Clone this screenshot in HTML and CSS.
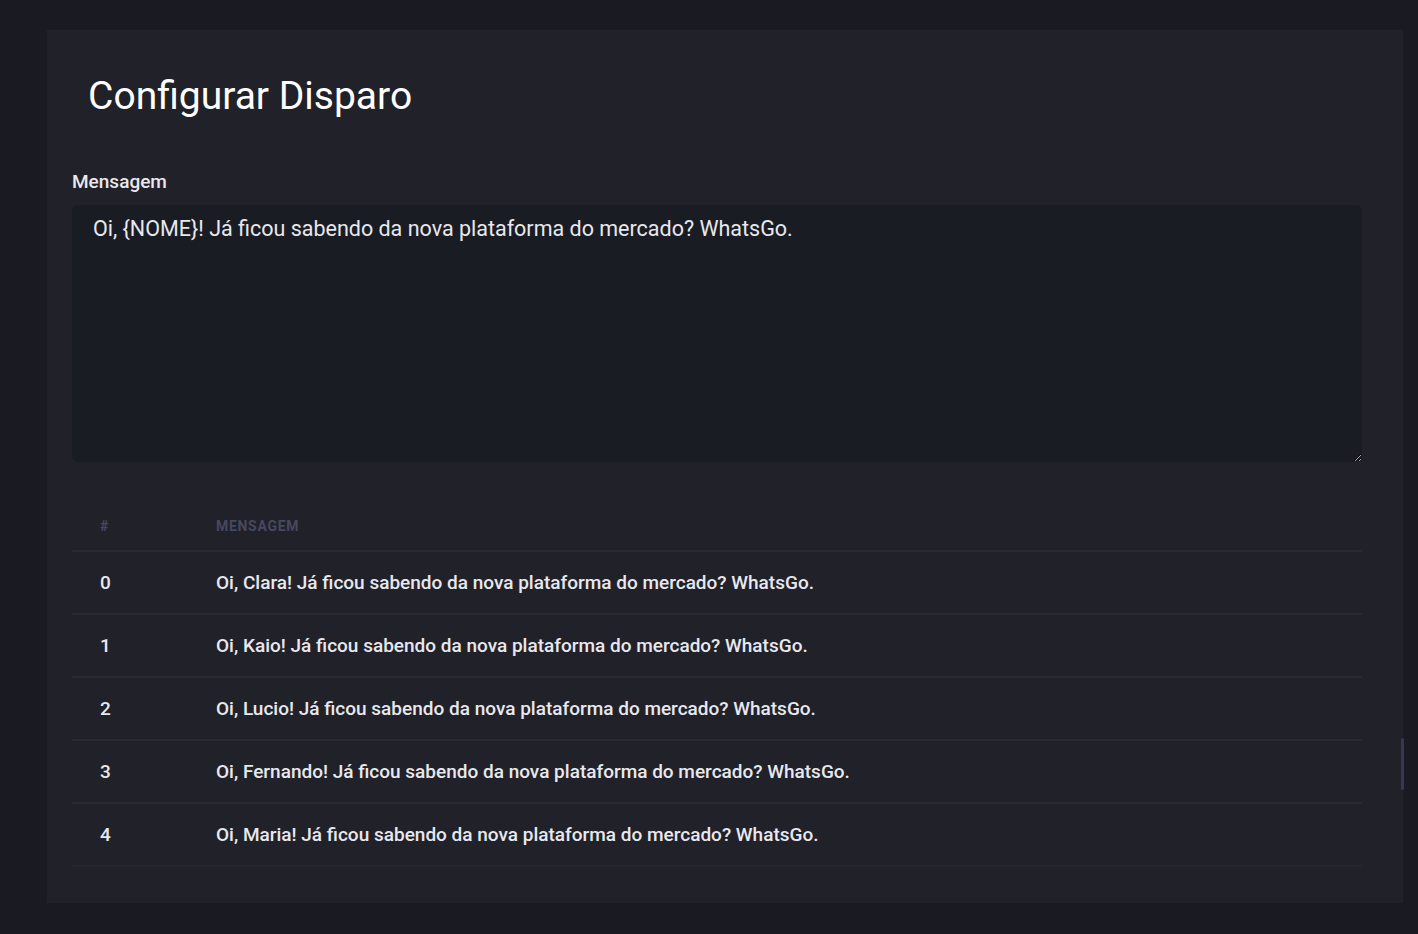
FILE: index.html
```html
<!DOCTYPE html>
<html lang="pt">
<head>
<meta charset="utf-8">
<title>Configurar Disparo</title>
<link rel="stylesheet" href="styles.css">
</head>
<body>
<div class="page">
  <main class="card">
    <h1 class="title">Configurar Disparo</h1>
    <label class="label" for="msg">Mensagem</label>
    <textarea id="msg" class="message">Oi, {NOME}! Já ficou sabendo da nova plataforma do mercado? WhatsGo.</textarea>
    <table class="table">
      <thead>
        <tr><th class="col-num">#</th><th>Mensagem</th></tr>
      </thead>
      <tbody>
        <tr><td class="col-num">0</td><td>Oi, Clara! Já ficou sabendo da nova plataforma do mercado? WhatsGo.</td></tr>
        <tr><td class="col-num">1</td><td>Oi, Kaio! Já ficou sabendo da nova plataforma do mercado? WhatsGo.</td></tr>
        <tr><td class="col-num">2</td><td>Oi, Lucio! Já ficou sabendo da nova plataforma do mercado? WhatsGo.</td></tr>
        <tr><td class="col-num">3</td><td>Oi, Fernando! Já ficou sabendo da nova plataforma do mercado? WhatsGo.</td></tr>
        <tr><td class="col-num">4</td><td>Oi, Maria! Já ficou sabendo da nova plataforma do mercado? WhatsGo.</td></tr>
      </tbody>
    </table>
  </main>
  <div class="side">
    <div class="side-thumb"></div>
  </div>
</div>
</body>
</html>
```

FILE: styles.css
```css
* { box-sizing: border-box; }
html, body {
  margin: 0;
  padding: 0;
  background: #1a1b22;
  font-family: Roboto, "Liberation Sans", sans-serif;
  color: #e6e6ea;
}
.page {
  display: flex;
  padding: 30px 0 0 47px;
  height: 934px;
}
.card {
  width: 1356px;
  height: 873px;
  background: #212129;
  padding: 42px 41px 0 25px;
  display: flex;
  flex-direction: column;
}
.title {
  margin: 0 0 0 16px;
  font-size: 39px;
  font-weight: 400;
  line-height: 48px;
  color: #ffffff;
}
.label {
  margin-top: 51px;
  font-size: 19px;
  font-weight: 500;
  line-height: 22px;
  color: #e8e8ee;
}
.message {
  margin-top: 12px;
  width: 1290px;
  height: 257px;
  background: #1a1c23;
  border: none;
  border-radius: 6px;
  padding: 11px 21px 10px;
  font-family: Roboto, "Liberation Sans", sans-serif;
  font-size: 21.5px;
  line-height: 26px;
  color: #e8e8ee;
  resize: vertical;
  outline: none;
}
.table {
  margin-top: 42px;
  width: 1290px;
  border-collapse: collapse;
}
.table th {
  text-align: left;
  font-size: 14px;
  font-weight: 700;
  letter-spacing: 0.7px;
  text-transform: uppercase;
  color: #474860;
  height: 47px;
  padding: 0 0 2px;
  border-bottom: 2px solid #2a2a33;
}
.table td {
  font-size: 19px;
  font-weight: 500;
  color: #e8e8ee;
  height: 63px;
  padding: 0;
  border-bottom: 2px solid #292932;
}
.table tbody tr:last-child td {
  border-bottom-color: #25252e;
}
.table .col-num {
  width: 144px;
  padding-left: 28px;
}
.side {
  width: 15px;
  height: 867px;
  position: relative;
}
.side-thumb {
  position: absolute;
  left: -2px;
  top: 708px;
  width: 3px;
  height: 52px;
  background: #3c3456;
  border-radius: 2px;
}
```
